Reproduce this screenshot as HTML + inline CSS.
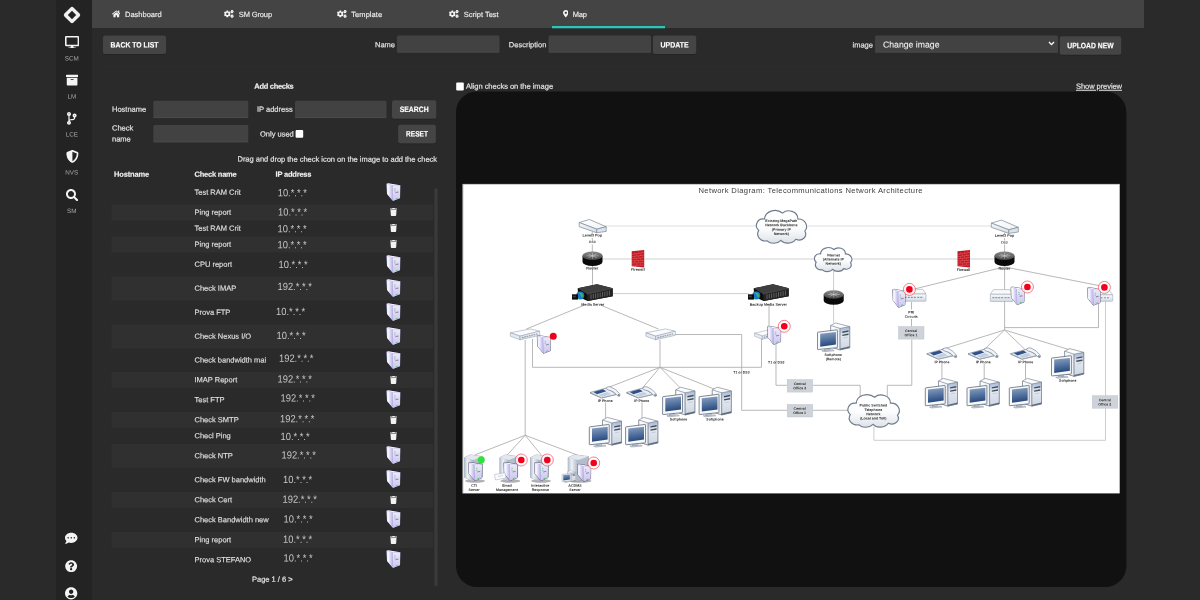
<!DOCTYPE html>
<html><head><meta charset="utf-8"><title>Map</title>
<style>
*{box-sizing:border-box;margin:0;padding:0}
html,body{width:1200px;height:600px;overflow:hidden;background:#2a2a2a;font-family:"Liberation Sans",sans-serif;color:#e6e6e6;font-size:7.5px}
#wrap{position:absolute;left:0;top:0;width:1200px;height:600px;will-change:transform}
.abs{position:absolute}
.t{position:absolute;white-space:nowrap;color:#e4e4e4;-webkit-text-stroke:0.18px #e4e4e4;transform-origin:0 0}
.c{text-align:center;transform-origin:50% 50%}
.b{font-weight:bold;color:#f0f0f0}
</style></head><body><div id="wrap">
<svg class="abs" style="left:0;top:0" width="1200" height="600" viewBox="0 0 1200 600"><defs><filter id="sh" x="-10%" y="-10%" width="120%" height="130%"><feDropShadow dx="0" dy=".5" stdDeviation=".5" flood-color="#000" flood-opacity=".3"/></filter></defs>
<rect x="56" y="0" width="36" height="600" rx="0" fill="#232323" />
<rect x="92" y="0" width="1052" height="28" rx="0" fill="#444" />
<rect x="552" y="26" width="113" height="2.3" rx="0" fill="#2ec4b6" />
<rect x="103" y="35.5" width="63" height="18.6" rx="2" fill="#444" filter="url(#sh)"/>
<rect x="397" y="35.4" width="102.5" height="17" rx="1.5" fill="#424242" />
<rect x="397" y="51.6" width="102.5" height="0.9" rx="0" fill="#4b4b4b" />
<rect x="548.5" y="35.4" width="102.5" height="17" rx="1.5" fill="#424242" />
<rect x="548.5" y="51.6" width="102.5" height="0.9" rx="0" fill="#4b4b4b" />
<rect x="653" y="35.6" width="43.2" height="18.5" rx="2" fill="#444" filter="url(#sh)"/>
<rect x="875" y="35.4" width="183" height="17" rx="1.5" fill="#424242" />
<rect x="875" y="51.6" width="183" height="0.9" rx="0" fill="#4b4b4b" />
<rect x="1059.7" y="36.3" width="61.5" height="18.5" rx="2" fill="#444" filter="url(#sh)"/>
<rect x="103" y="66.4" width="1018.5" height="0.8" rx="0" fill="#2f2f2f" />
<rect x="153.3" y="100.8" width="95" height="17.2" rx="1.5" fill="#424242" />
<rect x="153.3" y="117.2" width="95" height="0.9" rx="0" fill="#4b4b4b" />
<rect x="295" y="100.8" width="91.5" height="17.2" rx="1.5" fill="#424242" />
<rect x="295" y="117.2" width="91.5" height="0.9" rx="0" fill="#4b4b4b" />
<rect x="392" y="100.3" width="44.3" height="18.5" rx="2" fill="#444" filter="url(#sh)"/>
<rect x="153.3" y="125" width="95" height="17.2" rx="1.5" fill="#424242" />
<rect x="153.3" y="141.4" width="95" height="0.9" rx="0" fill="#4b4b4b" />
<rect x="295.6" y="130.1" width="7.6" height="7.6" rx="1" fill="#fff" />
<rect x="398.1" y="124.8" width="37.8" height="18.5" rx="2" fill="#444" filter="url(#sh)"/>
<rect x="111.5" y="204.4" width="321.5" height="16" rx="0" fill="#303030" />
<rect x="111.5" y="236.4" width="321.5" height="16" rx="0" fill="#303030" />
<rect x="111.5" y="276.4" width="321.5" height="24" rx="0" fill="#303030" />
<rect x="111.5" y="324.4" width="321.5" height="24" rx="0" fill="#303030" />
<rect x="111.5" y="371.9" width="321.5" height="16" rx="0" fill="#303030" />
<rect x="111.5" y="411.9" width="321.5" height="16" rx="0" fill="#303030" />
<rect x="111.5" y="443.9" width="321.5" height="24" rx="0" fill="#303030" />
<rect x="111.5" y="491.9" width="321.5" height="16" rx="0" fill="#303030" />
<rect x="111.5" y="531.9" width="321.5" height="16" rx="0" fill="#303030" />
<rect x="434.3" y="188.5" width="3.3" height="397.5" rx="0" fill="#3a3a3a" />
<rect x="456.2" y="82.6" width="7.6" height="7.8" rx="1" fill="#fff" />
<rect x="456" y="91.4" width="670.4" height="495.6" rx="21" fill="#111" />
</svg>
<svg class="abs" style="left:62px;top:4.85px" width="20" height="20" viewBox="-10 -10 20 20"><rect x="-4.650" y="-4.650" width="9.300" height="9.300" rx=".3" transform="rotate(45)" fill="none" stroke="#f1f1f1" stroke-width="3.400" stroke-linejoin="round"/></svg>
<svg class="abs" style="left:65.1px;top:35.6px" width="14.20" height="12.62" viewBox="0 0 576 512" ><path fill="#f4f4f4" fill-rule="evenodd" d="M528 0H48C21.5 0 0 21.5 0 48v320c0 26.5 21.5 48 48 48h192l-16 48h-72c-13.3 0-24 10.7-24 24s10.7 24 24 24h272c13.3 0 24-10.7 24-24s-10.7-24-24-24h-72l-16-48h192c26.5 0 48-21.5 48-48V48c0-26.5-21.5-48-48-48zm-16 352H64V64h448v288z"/></svg>
<svg class="abs" style="left:66.1px;top:74.3px" width="12.20" height="12.20" viewBox="0 0 512 512" ><path fill="#f4f4f4" fill-rule="evenodd" d="M32 448c0 17.7 14.3 32 32 32h384c17.7 0 32-14.3 32-32V160H32v288zm160-212c0-6.6 5.4-12 12-12h104c6.6 0 12 5.4 12 12v8c0 6.6-5.4 12-12 12H204c-6.6 0-12-5.4-12-12v-8zM480 32H32C14.3 32 0 46.3 0 64v48c0 8.8 7.2 16 16 16h480c8.8 0 16-7.2 16-16V64c0-17.7-14.3-32-32-32z"/></svg>
<svg class="abs" style="left:67.4px;top:111.9px" width="9.60" height="12.80" viewBox="0 0 384 512" ><path fill="#f4f4f4" fill-rule="evenodd" d="M384 144c0-44.2-35.8-80-80-80s-80 35.800-80 80c0 36.400 24.300 67.100 57.500 76.800-.6 16.100-4.200 28.500-11 36.900-15.400 19.200-49.300 22.400-85.200 25.700-28.200 2.600-57.400 5.400-81.300 16.900v-144c32.500-10.200 56-40.500 56-76.300 0-44.200-35.800-80-80-80S0 35.800 0 80c0 35.800 23.500 66.100 56 76.300v199.300C23.500 365.900 0 396.200 0 432c0 44.200 35.800 80 80 80s80-35.800 80-80c0-34-21.200-63.100-51.200-74.600 3.100-5.200 7.800-9.800 14.900-13.400 16.200-8.200 40.400-10.400 66.100-12.800 42.200-3.900 90-8.400 118.200-43.400 14-17.400 21.100-39.800 21.600-67.900 31.600-10.800 54.400-40.700 54.400-75.900zM80 64c8.800 0 16 7.200 16 16s-7.200 16-16 16-16-7.200-16-16 7.200-16 16-16zm0 384c-8.800 0-16-7.200-16-16s7.200-16 16-16 16 7.200 16 16-7.200 16-16 16zm224-320c8.800 0 16 7.200 16 16s-7.200 16-16 16-16-7.200-16-16 7.200-16 16-16z"/></svg>
<svg class="abs" style="left:65.8px;top:149.85px" width="12.80" height="12.80" viewBox="0 0 512 512" ><path fill="#f4f4f4" fill-rule="evenodd" d="M466.5 83.7l-192-80a48.150 48.150 0 0 0-36.900 0l-192 80C27.700 91.100 16 108.600 16 128c0 198.500 114.500 335.700 221.500 380.300 11.800 4.900 25.100 4.900 36.900 0C360.100 472.600 496 349.300 496 128c0-19.400-11.700-36.900-29.500-44.300zM256.100 446.300l-.1-381 175.900 73.300c-3.300 151.400-82.100 261.100-175.800 307.700z"/></svg>
<svg class="abs" style="left:66.05px;top:188.85px" width="12.30" height="12.30" viewBox="0 0 512 512" ><path fill="#f4f4f4" fill-rule="evenodd" d="M505 442.7L405.3 343c-4.5-4.5-10.6-7-17-7H372c27.6-35.3 44-79.7 44-128C416 93.1 322.9 0 208 0S0 93.1 0 208s93.1 208 208 208c48.3 0 92.7-16.4 128-44v16.3c0 6.4 2.5 12.5 7 17l99.7 99.7c9.4 9.4 24.6 9.4 33.9 0l28.3-28.3c9.4-9.4 9.4-24.6.1-34zM208 336c-70.7 0-128-57.2-128-128 0-70.7 57.2-128 128-128 70.7 0 128 57.2 128 128 0 70.7-57.2 128-128 128z"/></svg>
<svg class="abs" style="left:65.35px;top:531.75px" width="12.50" height="12.50" viewBox="0 0 512 512" ><path fill="#f4f4f4" fill-rule="evenodd" d="M256 32C114.600 32 0 125.100 0 240c0 49.600 21.400 95 57 130.700C44.500 421.100 2.700 466 2.200 466.500c-2.200 2.300-2.800 5.700-1.500 8.700S4.800 480 8 480c66.300 0 116-31.800 140.600-51.400 32.700 12.300 69 19.400 107.400 19.400 141.400 0 256-93.100 256-208S397.400 32 256 32zM128 272c-17.700 0-32-14.300-32-32s14.300-32 32-32 32 14.300 32 32-14.300 32-32 32zm128 0c-17.700 0-32-14.300-32-32s14.300-32 32-32 32 14.300 32 32-14.300 32-32 32zm128 0c-17.700 0-32-14.300-32-32s14.300-32 32-32 32 14.300 32 32-14.300 32-32 32z"/></svg>
<svg class="abs" style="left:65.45px;top:559.85px" width="12.30" height="12.30" viewBox="0 0 512 512" ><path fill="#f4f4f4" fill-rule="evenodd" d="M504 256c0 136.997-111.043 248-248 248S8 392.997 8 256C8 119.083 119.043 8 256 8s248 111.083 248 248zM262.655 90c-54.497 0-89.255 22.957-116.549 63.758-3.536 5.286-2.353 12.415 2.715 16.258l34.699 26.310c5.205 3.947 12.621 3.008 16.665-2.122 17.864-22.658 30.113-35.797 57.303-35.797 20.429 0 45.698 13.148 45.698 32.958 0 14.976-12.363 22.667-32.534 33.976C247.128 238.528 216 254.941 216 296v4c0 6.627 5.373 12 12 12h56c6.627 0 12-5.373 12-12v-1.333c0-28.462 83.186-29.647 83.186-106.667 0-58.002-60.165-102-116.531-102zM256 338c-25.365 0-46 20.635-46 46 0 25.364 20.635 46 46 46s46-20.636 46-46c0-25.365-20.635-46-46-46z"/></svg>
<svg class="abs" style="left:65.45px;top:587.2px" width="12.30" height="12.70" viewBox="0 0 496 512" ><path fill="#f4f4f4" fill-rule="evenodd" d="M248 8C111 8 0 119 0 256s111 248 248 248 248-111 248-248S385 8 248 8zm0 96c48.600 0 88 39.400 88 88s-39.400 88-88 88-88-39.400-88-88 39.400-88 88-88zm0 344c-58.700 0-111.300-26.600-146.500-68.200 18.800-35.400 55.600-59.800 98.500-59.800 2.400 0 4.800.4 7.100 1.100 13 4.200 26.600 6.900 40.900 6.900 14.300 0 28-2.700 40.900-6.900 2.300-.7 4.700-1.100 7.100-1.100 42.900 0 79.700 24.400 98.500 59.800C359.300 421.400 306.700 448 248 448z"/></svg>
<svg class="abs" style="left:111.7px;top:10.377777777777776px" width="8.60" height="7.64" viewBox="0 0 576 512" ><path fill="#f4f4f4" fill-rule="evenodd" d="M280.37 148.26L96 300.11V464a16 16 0 0 0 16 16l112.06-.29a16 16 0 0 0 15.92-16V368a16 16 0 0 1 16-16h64a16 16 0 0 1 16 16v95.64a16 16 0 0 0 16 16.05L464 480a16 16 0 0 0 16-16V300L295.67 148.26a12.19 12.19 0 0 0-15.3 0zM571.6 251.47L488 182.56V44.05a12 12 0 0 0-12-12h-56a12 12 0 0 0-12 12v72.61L318.47 43a48 48 0 0 0-61 0L4.34 251.47a12 12 0 0 0-1.6 16.9l25.5 31A12 12 0 0 0 45.15 301l235.22-193.74a12.19 12.19 0 0 1 15.3 0L530.9 301a12 12 0 0 0 16.9-1.6l25.5-31a12 12 0 0 0-1.7-16.93z"/></svg>
<svg class="abs" style="left:224.3px;top:10.28px" width="9.80" height="7.84" viewBox="0 0 640 512" ><path fill="#f4f4f4" fill-rule="evenodd" d="M512.1 191l-8.200 14.300c-3 5.300-9.400 7.500-15.100 5.400-11.800-4.400-22.600-10.700-32.100-18.600-4.600-3.800-5.800-10.500-2.800-15.700l8.200-14.300c-6.900-8-12.300-17.300-15.900-27.400h-16.500c-6 0-11.200-4.300-12.200-10.300-2-12-2.100-24.600 0-37.100 1-6 6.200-10.400 12.200-10.400h16.500c3.600-10.100 9-19.400 15.900-27.400l-8.200-14.300c-3-5.200-1.900-11.900 2.800-15.700 9.500-7.900 20.400-14.200 32.100-18.600 5.700-2.100 12.100.1 15.100 5.400l8.200 14.300c10.500-1.900 21.200-1.900 31.700 0L552 6.300c3-5.300 9.400-7.500 15.100-5.400 11.800 4.400 22.600 10.700 32.100 18.600 4.600 3.800 5.800 10.500 2.800 15.700l-8.200 14.300c6.900 8 12.300 17.300 15.900 27.400h16.500c6 0 11.200 4.300 12.200 10.300 2 12 2.100 24.600 0 37.100-1 6-6.200 10.400-12.200 10.400h-16.500c-3.600 10.100-9 19.400-15.900 27.400l8.200 14.300c3 5.200 1.900 11.900-2.800 15.700-9.500 7.900-20.400 14.200-32.100 18.600-5.700 2.100-12.100-.1-15.100-5.400l-8.200-14.300c-10.400 1.900-21.200 1.900-31.700 0zm-10.500-58.800c38.500 29.600 82.400-14.300 52.800-52.800-38.500-29.700-82.400 14.300-52.800 52.800zM386.300 286.100l33.700 16.800c10.100 5.800 14.500 18.100 10.500 29.100-8.900 24.200-26.400 46.400-42.600 65.800-7.400 8.900-20.200 11.100-30.300 5.300l-29.100-16.800c-16 13.700-34.600 24.600-54.900 31.700v33.600c0 11.600-8.300 21.600-19.700 23.600-24.600 4.200-50.400 4.400-75.900 0-11.500-2-20-11.900-20-23.600V418c-20.300-7.200-38.900-18-54.900-31.700L74 403c-10 5.800-22.900 3.600-30.300-5.300-16.200-19.400-33.300-41.600-42.200-65.700-4-10.900.4-23.200 10.500-29.100l33.300-16.800c-3.900-20.900-3.900-42.400 0-63.400L12 205.800c-10.100-5.800-14.600-18.100-10.500-29 8.900-24.200 26-46.400 42.200-65.800 7.400-8.900 20.200-11.100 30.300-5.300l29.100 16.800c16-13.700 34.600-24.600 54.900-31.700V57.100c0-11.500 8.200-21.500 19.600-23.500 24.600-4.200 50.500-4.400 76-.1 11.500 2 20 11.900 20 23.600v33.600c20.300 7.200 38.900 18 54.900 31.700l29.100-16.800c10-5.800 22.900-3.600 30.300 5.300 16.200 19.400 33.200 41.600 42.100 65.800 4 10.900.1 23.200-10 29.100l-33.700 16.800c3.900 21 3.900 42.500 0 63.500zm-117.600 21.100c59.200-77-28.700-164.900-105.700-105.700-59.200 77 28.700 164.900 105.700 105.700zm243.400 182.700l-8.200 14.300c-3 5.300-9.400 7.500-15.100 5.400-11.800-4.400-22.600-10.700-32.100-18.600-4.600-3.800-5.800-10.500-2.800-15.700l8.200-14.300c-6.900-8-12.300-17.300-15.900-27.400h-16.500c-6 0-11.200-4.300-12.200-10.300-2-12-2.100-24.600 0-37.100 1-6 6.200-10.400 12.200-10.400h16.500c3.600-10.100 9-19.400 15.900-27.400l-8.200-14.300c-3-5.200-1.900-11.900 2.800-15.700 9.500-7.900 20.400-14.200 32.100-18.600 5.700-2.100 12.100.1 15.100 5.400l8.200 14.300c10.500-1.900 21.200-1.900 31.700 0l8.200-14.300c3-5.300 9.400-7.500 15.100-5.400 11.800 4.400 22.600 10.700 32.100 18.600 4.600 3.800 5.800 10.500 2.800 15.700l-8.200 14.300c6.900 8 12.300 17.300 15.900 27.400h16.500c6 0 11.200 4.300 12.200 10.300 2 12 2.100 24.600 0 37.100-1 6-6.200 10.400-12.200 10.400h-16.500c-3.600 10.100-9 19.400-15.900 27.400l8.200 14.300c3 5.200 1.900 11.900-2.800 15.700-9.500 7.900-20.400 14.200-32.100 18.600-5.700 2.100-12.100-.1-15.100-5.400l-8.200-14.300c-10.400 1.900-21.200 1.900-31.700 0zM501.600 431c38.500 29.600 82.400-14.300 52.800-52.800-38.500-29.600-82.400 14.300-52.800 52.800z"/><circle cx="528" cy="106" r="62" fill="#f4f4f4" opacity=".75"/><circle cx="528" cy="405" r="62" fill="#f4f4f4" opacity=".75"/></svg>
<svg class="abs" style="left:336.8px;top:10.28px" width="9.80" height="7.84" viewBox="0 0 640 512" ><path fill="#f4f4f4" fill-rule="evenodd" d="M512.1 191l-8.200 14.300c-3 5.300-9.400 7.500-15.100 5.400-11.800-4.400-22.600-10.700-32.100-18.600-4.600-3.800-5.800-10.500-2.800-15.700l8.200-14.300c-6.900-8-12.300-17.300-15.900-27.400h-16.500c-6 0-11.200-4.300-12.200-10.300-2-12-2.100-24.600 0-37.100 1-6 6.200-10.400 12.200-10.400h16.500c3.600-10.100 9-19.400 15.900-27.400l-8.200-14.300c-3-5.200-1.900-11.900 2.800-15.700 9.500-7.900 20.400-14.200 32.100-18.600 5.700-2.100 12.100.1 15.100 5.400l8.200 14.300c10.500-1.900 21.200-1.900 31.700 0L552 6.300c3-5.300 9.400-7.500 15.100-5.400 11.800 4.400 22.600 10.700 32.100 18.600 4.600 3.800 5.800 10.500 2.800 15.700l-8.200 14.300c6.900 8 12.300 17.300 15.900 27.400h16.500c6 0 11.200 4.300 12.200 10.300 2 12 2.100 24.600 0 37.100-1 6-6.200 10.400-12.200 10.400h-16.500c-3.600 10.100-9 19.400-15.900 27.400l8.200 14.300c3 5.200 1.900 11.900-2.800 15.700-9.500 7.900-20.400 14.200-32.100 18.600-5.700 2.100-12.100-.1-15.100-5.400l-8.200-14.300c-10.400 1.900-21.200 1.900-31.700 0zm-10.500-58.800c38.500 29.600 82.400-14.300 52.800-52.800-38.500-29.700-82.400 14.300-52.800 52.800zM386.300 286.100l33.700 16.800c10.100 5.800 14.500 18.100 10.500 29.100-8.900 24.200-26.400 46.400-42.600 65.800-7.400 8.900-20.200 11.100-30.300 5.300l-29.100-16.800c-16 13.700-34.600 24.600-54.900 31.700v33.600c0 11.600-8.300 21.600-19.700 23.600-24.600 4.200-50.400 4.400-75.900 0-11.500-2-20-11.900-20-23.600V418c-20.300-7.200-38.900-18-54.900-31.700L74 403c-10 5.800-22.900 3.600-30.300-5.300-16.200-19.400-33.300-41.600-42.200-65.700-4-10.900.4-23.200 10.500-29.100l33.300-16.800c-3.900-20.900-3.900-42.400 0-63.400L12 205.800c-10.100-5.800-14.600-18.100-10.500-29 8.900-24.200 26-46.400 42.200-65.800 7.400-8.900 20.200-11.100 30.300-5.300l29.100 16.800c16-13.700 34.600-24.600 54.900-31.700V57.100c0-11.500 8.200-21.500 19.600-23.500 24.600-4.200 50.500-4.400 76-.1 11.500 2 20 11.900 20 23.600v33.600c20.300 7.200 38.900 18 54.900 31.700l29.100-16.800c10-5.800 22.900-3.600 30.300 5.300 16.200 19.400 33.200 41.600 42.100 65.800 4 10.900.1 23.200-10 29.100l-33.700 16.800c3.900 21 3.900 42.500 0 63.500zm-117.600 21.100c59.200-77-28.700-164.900-105.700-105.700-59.200 77 28.700 164.900 105.700 105.700zm243.400 182.700l-8.200 14.300c-3 5.300-9.400 7.500-15.100 5.400-11.800-4.400-22.600-10.700-32.100-18.600-4.600-3.800-5.800-10.500-2.800-15.700l8.200-14.300c-6.900-8-12.300-17.300-15.900-27.400h-16.500c-6 0-11.200-4.300-12.200-10.300-2-12-2.100-24.600 0-37.100 1-6 6.200-10.400 12.200-10.400h16.500c3.600-10.100 9-19.400 15.900-27.400l-8.200-14.300c-3-5.200-1.900-11.900 2.800-15.700 9.500-7.900 20.400-14.200 32.100-18.600 5.700-2.100 12.100.1 15.100 5.400l8.200 14.300c10.500-1.900 21.200-1.900 31.700 0l8.200-14.300c3-5.300 9.400-7.500 15.100-5.400 11.800 4.400 22.600 10.700 32.100 18.600 4.600 3.800 5.800 10.500 2.800 15.700l-8.200 14.300c6.900 8 12.300 17.300 15.900 27.400h16.500c6 0 11.200 4.300 12.200 10.300 2 12 2.100 24.600 0 37.100-1 6-6.200 10.400-12.200 10.400h-16.500c-3.600 10.100-9 19.400-15.900 27.400l8.200 14.300c3 5.200 1.900 11.900-2.800 15.700-9.500 7.900-20.400 14.200-32.100 18.600-5.700 2.100-12.100-.1-15.100-5.400l-8.200-14.300c-10.400 1.900-21.200 1.900-31.700 0zM501.600 431c38.500 29.600 82.400-14.300 52.800-52.800-38.500-29.600-82.400 14.300-52.800 52.800z"/><circle cx="528" cy="106" r="62" fill="#f4f4f4" opacity=".75"/><circle cx="528" cy="405" r="62" fill="#f4f4f4" opacity=".75"/></svg>
<svg class="abs" style="left:449.3px;top:10.28px" width="9.80" height="7.84" viewBox="0 0 640 512" ><path fill="#f4f4f4" fill-rule="evenodd" d="M512.1 191l-8.200 14.300c-3 5.300-9.400 7.500-15.100 5.400-11.800-4.400-22.600-10.700-32.100-18.600-4.600-3.800-5.800-10.500-2.800-15.700l8.200-14.300c-6.900-8-12.300-17.300-15.900-27.400h-16.500c-6 0-11.200-4.300-12.200-10.300-2-12-2.100-24.600 0-37.100 1-6 6.200-10.400 12.200-10.400h16.500c3.600-10.100 9-19.400 15.900-27.400l-8.200-14.300c-3-5.200-1.900-11.900 2.800-15.700 9.500-7.900 20.400-14.200 32.100-18.600 5.700-2.100 12.100.1 15.100 5.400l8.200 14.300c10.500-1.900 21.200-1.900 31.700 0L552 6.300c3-5.300 9.400-7.500 15.100-5.400 11.800 4.400 22.600 10.700 32.100 18.600 4.600 3.800 5.800 10.500 2.800 15.700l-8.200 14.300c6.900 8 12.300 17.300 15.900 27.400h16.500c6 0 11.200 4.300 12.200 10.300 2 12 2.100 24.600 0 37.100-1 6-6.200 10.400-12.200 10.400h-16.500c-3.600 10.100-9 19.400-15.900 27.400l8.200 14.300c3 5.200 1.900 11.900-2.800 15.700-9.500 7.900-20.400 14.200-32.100 18.600-5.700 2.100-12.100-.1-15.100-5.400l-8.200-14.300c-10.400 1.900-21.200 1.900-31.700 0zm-10.500-58.800c38.500 29.600 82.400-14.300 52.800-52.800-38.500-29.700-82.400 14.300-52.800 52.800zM386.300 286.100l33.700 16.800c10.100 5.800 14.500 18.100 10.500 29.100-8.900 24.200-26.400 46.400-42.600 65.800-7.400 8.900-20.200 11.100-30.300 5.300l-29.100-16.800c-16 13.700-34.600 24.600-54.900 31.700v33.600c0 11.600-8.300 21.600-19.700 23.600-24.600 4.200-50.400 4.400-75.900 0-11.500-2-20-11.900-20-23.600V418c-20.300-7.200-38.900-18-54.900-31.700L74 403c-10 5.800-22.900 3.600-30.300-5.300-16.200-19.400-33.300-41.600-42.200-65.700-4-10.900.4-23.200 10.500-29.100l33.300-16.800c-3.900-20.900-3.900-42.400 0-63.400L12 205.800c-10.100-5.800-14.600-18.100-10.500-29 8.900-24.200 26-46.400 42.200-65.800 7.400-8.900 20.200-11.100 30.300-5.300l29.100 16.800c16-13.700 34.600-24.600 54.900-31.700V57.100c0-11.500 8.200-21.500 19.600-23.500 24.600-4.200 50.500-4.400 76-.1 11.500 2 20 11.900 20 23.600v33.600c20.300 7.200 38.900 18 54.900 31.700l29.100-16.800c10-5.800 22.900-3.600 30.300 5.300 16.200 19.400 33.200 41.600 42.100 65.800 4 10.900.1 23.200-10 29.100l-33.700 16.800c3.900 21 3.900 42.500 0 63.500zm-117.600 21.100c59.200-77-28.700-164.900-105.700-105.700-59.200 77 28.700 164.900 105.700 105.700zm243.400 182.700l-8.200 14.300c-3 5.300-9.400 7.500-15.100 5.400-11.800-4.400-22.600-10.700-32.100-18.600-4.600-3.800-5.800-10.500-2.800-15.700l8.200-14.300c-6.900-8-12.300-17.300-15.900-27.400h-16.500c-6 0-11.200-4.300-12.200-10.300-2-12-2.100-24.600 0-37.100 1-6 6.200-10.400 12.200-10.400h16.500c3.600-10.100 9-19.400 15.900-27.400l-8.200-14.300c-3-5.200-1.900-11.900 2.800-15.700 9.500-7.900 20.400-14.200 32.100-18.600 5.700-2.100 12.100.1 15.100 5.400l8.200 14.300c10.500-1.900 21.200-1.900 31.700 0l8.200-14.300c3-5.300 9.400-7.500 15.100-5.400 11.800 4.400 22.600 10.700 32.100 18.600 4.600 3.800 5.800 10.500 2.800 15.700l-8.200 14.300c6.900 8 12.300 17.300 15.900 27.400h16.500c6 0 11.200 4.300 12.200 10.300 2 12 2.100 24.600 0 37.100-1 6-6.200 10.400-12.200 10.400h-16.500c-3.600 10.100-9 19.400-15.900 27.400l8.200 14.300c3 5.200 1.900 11.900-2.800 15.700-9.500 7.900-20.400 14.200-32.100 18.600-5.700 2.100-12.100-.1-15.100-5.400l-8.200-14.300c-10.400 1.900-21.200 1.900-31.700 0zM501.600 431c38.500 29.600 82.400-14.300 52.800-52.800-38.500-29.600-82.400 14.300-52.800 52.800z"/><circle cx="528" cy="106" r="62" fill="#f4f4f4" opacity=".75"/><circle cx="528" cy="405" r="62" fill="#f4f4f4" opacity=".75"/></svg>
<svg class="abs" style="left:562.9px;top:10.466666666666667px" width="5.60" height="7.47" viewBox="0 0 384 512" ><path fill="#f4f4f4" fill-rule="evenodd" d="M172.268 501.67C26.97 291.031 0 269.413 0 192 0 85.961 85.961 0 192 0s192 85.961 192 192c0 77.413-26.97 99.031-172.268 309.67-9.535 13.774-29.93 13.773-39.464 0zM192 272c44.183 0 80-35.817 80-80s-35.817-80-80-80-80 35.817-80 80 35.817 80 80 80z"/></svg>
<svg class="abs" style="left:1047.5px;top:41px" width="7" height="5" viewBox="0 0 7 5"><path d="M1 1 L3.500 3.600 L6 1" fill="none" stroke="#fff" stroke-width="1.300"/></svg>
<svg class="abs" style="left:386.1px;top:182.7px" width="14.800" height="18.500" viewBox="0 0 15 19" preserveAspectRatio="none"><use href="#srv"/></svg>
<svg class="abs" style="left:389.7px;top:208.2px" width="7.00" height="8.00" viewBox="0 0 448 512" ><path fill="#f2f2f2" fill-rule="evenodd" d="M432 32H312l-9.4-18.700A24 24 0 0 0 281.100 0H166.800a23.720 23.720 0 0 0-21.400 13.300L136 32H16A16 16 0 0 0 0 48v32a16 16 0 0 0 16 16h416a16 16 0 0 0 16-16V48a16 16 0 0 0-16-16zM53.200 467a48 48 0 0 0 47.900 45h245.800a48 48 0 0 0 47.900-45L416 128H32z"/></svg>
<svg class="abs" style="left:389.7px;top:224.2px" width="7.00" height="8.00" viewBox="0 0 448 512" ><path fill="#f2f2f2" fill-rule="evenodd" d="M432 32H312l-9.4-18.700A24 24 0 0 0 281.100 0H166.800a23.720 23.720 0 0 0-21.400 13.300L136 32H16A16 16 0 0 0 0 48v32a16 16 0 0 0 16 16h416a16 16 0 0 0 16-16V48a16 16 0 0 0-16-16zM53.200 467a48 48 0 0 0 47.900 45h245.800a48 48 0 0 0 47.900-45L416 128H32z"/></svg>
<svg class="abs" style="left:389.7px;top:240.2px" width="7.00" height="8.00" viewBox="0 0 448 512" ><path fill="#f2f2f2" fill-rule="evenodd" d="M432 32H312l-9.4-18.700A24 24 0 0 0 281.100 0H166.800a23.720 23.720 0 0 0-21.400 13.300L136 32H16A16 16 0 0 0 0 48v32a16 16 0 0 0 16 16h416a16 16 0 0 0 16-16V48a16 16 0 0 0-16-16zM53.200 467a48 48 0 0 0 47.900 45h245.800a48 48 0 0 0 47.900-45L416 128H32z"/></svg>
<svg class="abs" style="left:386.1px;top:254.7px" width="14.800" height="18.500" viewBox="0 0 15 19" preserveAspectRatio="none"><use href="#srv"/></svg>
<svg class="abs" style="left:386.1px;top:278.7px" width="14.800" height="18.500" viewBox="0 0 15 19" preserveAspectRatio="none"><use href="#srv"/></svg>
<svg class="abs" style="left:386.1px;top:302.7px" width="14.800" height="18.500" viewBox="0 0 15 19" preserveAspectRatio="none"><use href="#srv"/></svg>
<svg class="abs" style="left:386.1px;top:326.7px" width="14.800" height="18.500" viewBox="0 0 15 19" preserveAspectRatio="none"><use href="#srv"/></svg>
<svg class="abs" style="left:386.1px;top:350.7px" width="14.800" height="18.500" viewBox="0 0 15 19" preserveAspectRatio="none"><use href="#srv"/></svg>
<svg class="abs" style="left:389.7px;top:375.7px" width="7.00" height="8.00" viewBox="0 0 448 512" ><path fill="#f2f2f2" fill-rule="evenodd" d="M432 32H312l-9.4-18.700A24 24 0 0 0 281.100 0H166.800a23.720 23.720 0 0 0-21.400 13.300L136 32H16A16 16 0 0 0 0 48v32a16 16 0 0 0 16 16h416a16 16 0 0 0 16-16V48a16 16 0 0 0-16-16zM53.200 467a48 48 0 0 0 47.900 45h245.800a48 48 0 0 0 47.900-45L416 128H32z"/></svg>
<svg class="abs" style="left:386.1px;top:390.2px" width="14.800" height="18.500" viewBox="0 0 15 19" preserveAspectRatio="none"><use href="#srv"/></svg>
<svg class="abs" style="left:389.7px;top:415.7px" width="7.00" height="8.00" viewBox="0 0 448 512" ><path fill="#f2f2f2" fill-rule="evenodd" d="M432 32H312l-9.4-18.700A24 24 0 0 0 281.100 0H166.800a23.720 23.720 0 0 0-21.400 13.300L136 32H16A16 16 0 0 0 0 48v32a16 16 0 0 0 16 16h416a16 16 0 0 0 16-16V48a16 16 0 0 0-16-16zM53.200 467a48 48 0 0 0 47.900 45h245.800a48 48 0 0 0 47.900-45L416 128H32z"/></svg>
<svg class="abs" style="left:389.7px;top:431.7px" width="7.00" height="8.00" viewBox="0 0 448 512" ><path fill="#f2f2f2" fill-rule="evenodd" d="M432 32H312l-9.4-18.700A24 24 0 0 0 281.100 0H166.800a23.720 23.720 0 0 0-21.400 13.300L136 32H16A16 16 0 0 0 0 48v32a16 16 0 0 0 16 16h416a16 16 0 0 0 16-16V48a16 16 0 0 0-16-16zM53.200 467a48 48 0 0 0 47.900 45h245.800a48 48 0 0 0 47.900-45L416 128H32z"/></svg>
<svg class="abs" style="left:386.1px;top:446.2px" width="14.800" height="18.500" viewBox="0 0 15 19" preserveAspectRatio="none"><use href="#srv"/></svg>
<svg class="abs" style="left:386.1px;top:470.2px" width="14.800" height="18.500" viewBox="0 0 15 19" preserveAspectRatio="none"><use href="#srv"/></svg>
<svg class="abs" style="left:389.7px;top:495.7px" width="7.00" height="8.00" viewBox="0 0 448 512" ><path fill="#f2f2f2" fill-rule="evenodd" d="M432 32H312l-9.4-18.700A24 24 0 0 0 281.100 0H166.800a23.720 23.720 0 0 0-21.400 13.300L136 32H16A16 16 0 0 0 0 48v32a16 16 0 0 0 16 16h416a16 16 0 0 0 16-16V48a16 16 0 0 0-16-16zM53.200 467a48 48 0 0 0 47.900 45h245.800a48 48 0 0 0 47.900-45L416 128H32z"/></svg>
<svg class="abs" style="left:386.1px;top:510.2px" width="14.800" height="18.500" viewBox="0 0 15 19" preserveAspectRatio="none"><use href="#srv"/></svg>
<svg class="abs" style="left:389.7px;top:535.7px" width="7.00" height="8.00" viewBox="0 0 448 512" ><path fill="#f2f2f2" fill-rule="evenodd" d="M432 32H312l-9.4-18.700A24 24 0 0 0 281.100 0H166.800a23.720 23.720 0 0 0-21.400 13.300L136 32H16A16 16 0 0 0 0 48v32a16 16 0 0 0 16 16h416a16 16 0 0 0 16-16V48a16 16 0 0 0-16-16zM53.200 467a48 48 0 0 0 47.900 45h245.800a48 48 0 0 0 47.900-45L416 128H32z"/></svg>
<svg class="abs" style="left:386.1px;top:550.2px" width="14.800" height="18.500" viewBox="0 0 15 19" preserveAspectRatio="none"><use href="#srv"/></svg>
<svg class="abs" style="left:0;top:0" width="1200" height="600" viewBox="0 0 1200 600">
<defs>
<linearGradient id="lv" x1="0" y1="0" x2="1" y2="0"><stop offset="0" stop-color="#dcd8f7"/><stop offset=".25" stop-color="#fbfaff"/><stop offset="1" stop-color="#b4aee6"/></linearGradient>
<linearGradient id="lvf" x1="0" y1="0" x2="0" y2="1"><stop offset="0" stop-color="#ece9fb"/><stop offset="1" stop-color="#cbc5ef"/></linearGradient>
<g id="srv"><path d="M.5 .75 L2.250 .25 L14.500 2.250 L14.500 2.750 L14.250 15.750 L7 18.500 L1 11.250 Z" fill="#8f88c8" stroke="#0c0c14" stroke-opacity=".55" stroke-width=".9"/><path d="M.5 .75 L6.750 2.250 L7 18.500 L1 11.250 Z" fill="url(#lv)"/><path d="M6.750 2.250 L14.500 2.750 L14.250 15.750 L7 18.500 Z" fill="url(#lvf)"/><path d="M.5 .75 L2.250 .25 L14.500 2.250 L14.500 2.750 L6.750 2.250 Z" fill="#f4f2ff"/><rect x="8.400" y="5.700" width="1.300" height=".8" fill="#5fbf6a"/><rect x="8.400" y="7.700" width="1.300" height=".8" fill="#5fbf6a"/><path d="M9.600 9.300 L12.700 8.700 L12.700 9.700 L9.600 10.400 Z" fill="#8c8a9c"/><path d="M10 16 L11.800 15.300 L11.800 16.300 L10 17 Z" fill="#4fc45a"/></g>
<linearGradient id="swt" x1="0" y1="0" x2="1" y2="1"><stop offset="0" stop-color="#ffffff"/><stop offset="1" stop-color="#eef2f6"/></linearGradient>
<linearGradient id="swf" x1="0" y1="0" x2="0" y2="1"><stop offset="0" stop-color="#f8fafc"/><stop offset="1" stop-color="#d3dbe5"/></linearGradient>
<g id="sw" stroke="#7b8796" stroke-width=".7" stroke-linejoin="round"><path d="M0 3.300 L10.200 .3 L27 7.500 L17.500 10 Z" fill="url(#swt)"/><path d="M0 3.300 L17.500 10 L17.500 13.600 L0 7.500 Z" fill="url(#swf)"/><path d="M17.500 10 L27 7.500 L27 12.200 L17.500 13.600 Z" fill="#dbe3ec"/></g>
<g id="sw2" stroke-linejoin="round"><path d="M3.500 .3 L20.500 .3 L23.700 5 L.3 5 Z" fill="#f7f9fb" stroke="#8a96a6" stroke-width=".5"/><rect x=".3" y="5" width="23.400" height="7.200" rx=".8" fill="url(#swf)" stroke="#8a96a6" stroke-width=".5"/><path d="M2.500 8.300 h2 M5.500 8.300 h2 M8.500 8.300 h2 M11.500 8.300 h2 M15 8.300 h2 M18 8.300 h2" stroke="#6f7a8a" stroke-width="1.300" opacity=".75"/></g>
<g id="sw3" stroke="#8794a5" stroke-width=".5" stroke-linejoin="round"><path d="M.3 4.200 L20 .3 L29.700 2.600 L10 7.500 Z" fill="#fafbfd"/><path d="M.3 4.200 L10 7.500 L10 11.200 L.3 7.600 Z" fill="#e6ebf1"/><path d="M10 7.500 L29.700 2.600 L29.700 6.700 L10 11.200 Z" fill="url(#swf)"/><path d="M12 9 L28 5.200" stroke="#6f7b8c" stroke-width="1.200" stroke-dasharray="1.600 .8" opacity=".7"/></g>
<linearGradient id="rtt" x1="0" y1="0" x2="0" y2="1"><stop offset="0" stop-color="#8a8a8a"/><stop offset="1" stop-color="#444"/></linearGradient>
<g id="rt"><path d="M0 4 L0 9.500 A10 4 0 0 0 20 9.500 L20 4 Z" fill="#0a0a0a"/><ellipse cx="10" cy="4" rx="10" ry="4" fill="url(#rtt)"/><path d="M4 4 L16 4 M10 1.300 L10 6.700 M6 2.300 L14 5.700 M14 2.300 L6 5.700" stroke="#e8e8e8" stroke-width=".55" opacity=".8"/></g>
<g id="fw"><path d="M0 1.300 L12.500 0 L12.500 16.700 L0 15.500 Z" fill="#c21822"/><path d="M0 4.300 L12.500 2.400 M0 6.400 L12.500 4.800 M0 8.400 L12.500 7.200 M0 10.500 L12.500 9.600 M0 12.500 L12.500 12 M0 14.600 L12.500 14.400" stroke="#f08a8a" stroke-width=".45" opacity=".8"/><path d="M3 2 L3 4 M7 1.300 L7 3.300 M10.500 .7 L10.500 2.700 M5 3.900 L5 5.800 M9 3.300 L9 5.300 M3 6 L3 8 M7 5.500 L7 7.600 M10.500 5.100 L10.500 7.300 M5 8 L5 10 M9 7.600 L9 9.800 M3 10.100 L3 12.200 M7 9.900 L7 12.100 M10.500 9.700 L10.500 12 M5 12.300 L5 14.500 M9 12.200 L9 14.500" stroke="#f08a8a" stroke-width=".4" opacity=".6"/></g>
<g id="ms"><path d="M5.700 4 L25 0 L40.700 4 L40.700 12 L15.700 16.700 L6.300 12.700 Z" fill="#0e0e0e"/><path d="M5.700 4 L25 0 L40.700 4 L15 9.700 Z" fill="#3e3e3e"/><path d="M15 9.700 L40.700 4.300 L40.700 12 L15.700 16.700 Z" fill="#232323"/><path d="M19.0 10.16 L19.0 14.65 M21.3 9.68 L21.3 14.22 M23.6 9.19 L23.6 13.78 M25.9 8.71 L25.9 13.35 M28.2 8.23 L28.2 12.92 M30.5 7.74 L30.5 12.49 M32.8 7.26 L32.8 12.05 M35.1 6.78 L35.1 11.62 M37.4 6.30 L37.4 11.19" stroke="#707070" stroke-width=".8"/><path d="M15 9.700 L40.700 4.200" stroke="#6a6a6a" stroke-width=".5"/><circle cx="8.200" cy="11.300" r="4" fill="#1b74d6"/><path d="M6 8 Q9.500 8.300 10.600 9.500 Q11.500 11.500 10 13.500 Q8.500 12 8.800 10.500 Q7 9.500 6 8 Z" fill="#3fb84c"/><path d="M5.500 13.500 Q7 13 7.500 14.800 Q6.500 14.800 5.500 13.500Z" fill="#3fb84c"/><rect x="0" y="10" width="6" height="5.300" fill="#0c0c0c"/><rect x=".7" y="11.300" width="3.200" height="1.800" fill="#3a3a3a"/></g>
<linearGradient id="cl" x1="0" y1="0" x2="0" y2="1"><stop offset="0" stop-color="#ffffff"/><stop offset=".55" stop-color="#fbfcfd"/><stop offset="1" stop-color="#dde2e9"/></linearGradient>
<path id="cloud" d="M22 61 C9 63 0 52 6 42 C-3 34 3 19 17 21 C18 7 38 0 51 10 C60 2 80 6 80 21 C94 20 101 35 93 43 C99 53 88 63 76 58 C70 67 54 67 48 60 C41 67 28 67 22 61 Z" fill="url(#cl)" stroke="#6f7b8d" stroke-width="1.150" vector-effect="non-scaling-stroke"/>
<linearGradient id="scr" x1="0" y1="0" x2=".15" y2="1"><stop offset="0" stop-color="#8da4c4"/><stop offset=".45" stop-color="#5d7ba6"/><stop offset="1" stop-color="#27497d"/></linearGradient>
<linearGradient id="tw" x1="0" y1="0" x2="1" y2="0"><stop offset="0" stop-color="#ffffff"/><stop offset="1" stop-color="#e9eef4"/></linearGradient>
<linearGradient id="twf" x1="0" y1="0" x2="0" y2="1"><stop offset="0" stop-color="#a3b6d1"/><stop offset=".4" stop-color="#e2e8f0"/><stop offset="1" stop-color="#cbd5e2"/></linearGradient>
<g id="pc" stroke-linejoin="round"><g stroke="#6b7686" stroke-width=".6"><path d="M13.500 3 L18.400 .4 L32.500 4.100 L32.500 25.900 L22.900 28.100 L13.500 25 Z" fill="#fbfcfd"/><path d="M13.500 3 L22.900 6 L22.900 28.100 L13.500 25 Z" fill="url(#tw)"/><path d="M22.900 6 L32.500 4.100 L32.500 25.900 L22.900 28.100 Z" fill="url(#twf)"/></g><path d="M25.100 9.200 L31.300 8 L31.300 9.400 L25.100 10.600 Z M25.100 12.400 L31.300 11.300 L31.300 12.700 L25.100 13.800 Z" fill="#454d5b"/><path d="M26 15.800 L30.500 15" stroke="#9aa5b5" stroke-width=".4"/><path d="M22.900 26.700 L32.500 24.500 L32.500 25.900 L22.900 28.100 Z" fill="#4f5968" opacity=".85"/><path d="M7.500 27 L12 26.400 L12.800 28.600 L7 29.200 Z" fill="#c9d6e6" stroke="#6b7686" stroke-width=".4"/><path d="M4.500 29 L15.500 28 L17 29 L6.500 30 Z" fill="#dfe6ef" stroke="#6b7686" stroke-width=".45"/><path d="M.3 10.400 Q.3 9.900 .8 9.840 L19.600 7.480 Q20.200 7.400 20.200 8 L20.200 25.300 Q20.200 25.800 19.600 25.860 L.9 27.740 Q.3 27.800 .3 27.200 Z" fill="#f7f9fb" stroke="#58616f" stroke-width=".75"/><path d="M3 11.400 L18.700 9.700 L18.700 22.600 L3 24.800 Z" fill="url(#scr)"/></g>
<g id="ph" stroke-linejoin="round"><path d="M0 6 L11.700 11.300 L11.700 12.100 L0 6.900 Z" fill="#8f9bad"/><path d="M11.700 11.300 L26.600 7.800 L26.600 8.600 L11.700 12.100 Z" fill="#a9b4c4"/><path d="M0 6 L16.700 1.400 L26.600 7.800 L11.700 11.300 Z" fill="#e9eef4" stroke="#5f6b7c" stroke-width=".55"/><path d="M3.300 5.400 L13 2.700 L16.300 4.700 L7 7.700 Z" fill="#2f5288"/><path d="M8.500 8.400 L17 5.400 L21 7.500 L12.500 10.300 Z" fill="#c3cede"/><path d="M16.500 1 Q18 -.2 20.500 .3 Q26 2.500 29.300 6.800 Q30.800 8.800 29.600 9.700 Q28 10.300 26.800 8.600 Q24.500 5.500 21 4.200 Q18 3.600 16.800 2.700 Q15.800 1.800 16.500 1 Z" fill="#f1f4f8" stroke="#5f6b7c" stroke-width=".55"/><path d="M28 7.200 L30 8.300 L29.800 9.700 L27.600 9.300 Z" fill="#7f8b9d"/></g>
<linearGradient id="gt" x1="0" y1="0" x2="1" y2="0"><stop offset="0" stop-color="#b4bfce"/><stop offset=".35" stop-color="#eef1f5"/><stop offset="1" stop-color="#a7b2c3"/></linearGradient>
<g id="gtw"><ellipse cx="10.500" cy="26" rx="9.500" ry="1.800" fill="#000" opacity=".3"/><path d="M.5 3 L6 .3 L17.500 2 L17.500 22 L9 26.500 L.5 22.500 Z" fill="#b3bdcb" stroke="#7f8b9b" stroke-width=".45"/><path d="M.5 3 L9 5.500 L9 26.500 L.5 22.500 Z" fill="url(#gt)"/><path d="M.5 3 L6 .3 L17.500 2 L9 5.500 Z" fill="#e3e8ee"/></g>
<g id="bsv"><use href="#gtw"/><g transform="translate(3.800,7.500) scale(.92,.98)"><use href="#srv"/></g></g>
</defs>
<rect x="462.600" y="184" width="657.100" height="309.400" fill="#fff"/>
<path d="M462.600 184.250 L1119.700 184.250 M462.900 184 L462.900 493.400" stroke="#8c8c8c" stroke-width=".6" fill="none"/>
<g id="dg">
<path d="M605 226 L756 226 M808 226 L992 226" fill="none" stroke="#d2d2d2" stroke-width=".75"/>
<path d="M602.500 259 L631.700 259 M644.200 259 L814 259 M853 259 L957.500 259 M970 259 L995 259" fill="none" stroke="#c2c2c2" stroke-width=".75"/>
<path d="M613 293.600 L749 293.600" fill="none" stroke="#c2c2c2" stroke-width=".8"/>
<path d="M833.600 271 L833.600 290 M833.600 303 L833.600 323" fill="none" stroke="#cdcdcd" stroke-width="1"/>
<path d="M873.900 427 L873.900 440.300 L1105.500 440.300 L1105.500 408.200 M1105.500 395.600 L1105.500 301" fill="none" stroke="#c0c0c0" stroke-width=".8"/>
<path d="M592.3 232 L592.3 234 M592.3 238 L592.3 240.5 M592.3 244.5 L592.3 252 M592.5 265 L592.5 286 M1004.6 232.5 L1004.6 234 M1004.6 238 L1004.6 240.5 M1004.6 244.5 L1004.6 252 M584 305.3 L526.4 329 M601 305.3 L658.5 329 M525.2 340 L525.2 435.3 M525.2 435.3 L474.7 455 M525.2 435.3 L507.3 455 M525.2 435.3 L541.3 455 M525.2 435.3 L577.3 455 M532.5 339 L532.5 367.3 L761.5 367.3 L761.5 339 M660 340 L660 367.3 M660 367.3 L607 388 M660 367.3 L642.5 388 M660 367.3 L680.4 388 M660 367.3 L715.4 389.5 M605.6 402.5 L605.6 418 M642 402.5 L642 418 M674 334.5 L741.7 334.5 L741.7 410.3 L787 410.3 M769 305.5 L769 329 M776 344 L776 385.3 L787 385.3 M812.7 385.3 L860.2 385.3 L860.2 397 M812.7 410.3 L848 410.3 M887.3 396 L887.3 385.3 L911.8 385.3 L911.8 339.7 M911.5 302 L911.5 309.5 M911.5 319 L911.5 326.5 M1004 267 L913 289.3 M1005.2 267 L1104 286.6 M1004.6 265 L1004.6 330 M1098.5 302 L1098.5 327.6 L1004.6 327.6 M1004.6 330 L941.9 349.5 M1004.6 330 L984.2 349.5 M1004.6 330 L1025 349.5 M1004.6 330 L1068.8 349.5 M941.9 363.5 L941.9 379 M984.2 363.5 L984.2 379 M1025.5 363.5 L1025.5 379" fill="none" stroke="#ababab" stroke-width=".85"/>
<use href="#sw" transform="translate(579.2,219.2) scale(1,1)"/>
<use href="#rt" transform="translate(582.5,251.6) scale(1,1.06)"/>
<use href="#fw" transform="translate(631.7,250) scale(1,1.05)"/>
<use href="#ms" transform="translate(572,284.3) scale(1,1)"/>
<use href="#ms" transform="translate(748,284.3) scale(1,1)"/>
<use href="#cloud" transform="translate(755.5,207.6) scale(0.53,0.545455)"/>
<use href="#cloud" transform="translate(813.8,245.5) scale(0.395,0.398485)"/>
<use href="#rt" transform="translate(823.7,290.2) scale(1,1.08)"/>
<use href="#pc" transform="translate(817.2,322.6) scale(1,0.97)"/>
<use href="#sw" transform="translate(991.3,219.8) scale(1,1)"/>
<use href="#fw" transform="translate(957.5,250) scale(1,1.05)"/>
<use href="#rt" transform="translate(994.5,251.6) scale(1,1.06)"/>
<use href="#sw3" transform="translate(510,328.6) scale(1,1)"/>
<use href="#srv" transform="translate(536.8,335.3) scale(0.95,0.98)"/>
<circle cx="553.25" cy="336.3" r="3.5" fill="#f0001a"/>
<use href="#sw3" transform="translate(645.6,328.6) scale(1,1)"/>
<use href="#sw3" transform="translate(754.3,329.3) scale(0.8,0.9)"/>
<use href="#srv" transform="translate(767,326) scale(0.95,1)"/>
<circle cx="784.25" cy="326.3" r="6" fill="#fff" fill-opacity=".75" stroke="#f0465a" stroke-width=".7"/>
<circle cx="784.25" cy="326.3" r="3.3" fill="#f0001a"/>
<rect x="787.2" y="379.5" width="25.500" height="12.600" fill="#cdd3d9" stroke="#b8bfc7" stroke-width=".4"/>
<rect x="787.2" y="404.4" width="25.500" height="12.600" fill="#cdd3d9" stroke="#b8bfc7" stroke-width=".4"/>
<rect x="898.5" y="326.5" width="25.500" height="12.600" fill="#cdd3d9" stroke="#b8bfc7" stroke-width=".4"/>
<rect x="1092.3" y="395.6" width="25.500" height="12.600" fill="#cdd3d9" stroke="#b8bfc7" stroke-width=".4"/>
<use href="#cloud" transform="translate(847,391.8) scale(0.543,0.542424)"/>
<use href="#bsv" transform="translate(464,454.5) scale(1.05,1.02)"/>
<circle cx="481.3" cy="459.7" r="3.5" fill="#2fe23a"/>
<use href="#bsv" transform="translate(499.3,454.5) scale(1.05,1.02)"/>
<path d="M494.500 474.500 L505 472.800 L506 478 L495.500 480 Z" fill="#fafbfc" stroke="#8a96a6" stroke-width=".4"/><path d="M498 476.500 L503 475.600" stroke="#99a" stroke-width=".4"/>
<circle cx="521.3" cy="460" r="6" fill="#fff" fill-opacity=".75" stroke="#f0465a" stroke-width=".7"/>
<circle cx="521.3" cy="460" r="3.3" fill="#f0001a"/>
<use href="#bsv" transform="translate(530,454.5) scale(1.05,1.02)"/>
<circle cx="547.3" cy="460" r="6" fill="#fff" fill-opacity=".75" stroke="#f0465a" stroke-width=".7"/>
<circle cx="547.3" cy="460" r="3.3" fill="#f0001a"/>
<use href="#gtw" transform="translate(567.5,454.5) scale(1.2,1.02)"/>
<use href="#srv" transform="translate(577,464) scale(0.95,0.95)"/>
<use href="#pc" transform="translate(562,470.5) scale(0.42,0.4)"/>
<circle cx="593.7" cy="463" r="6" fill="#fff" fill-opacity=".75" stroke="#f0465a" stroke-width=".7"/>
<circle cx="593.7" cy="463" r="3.3" fill="#f0001a"/>
<use href="#ph" transform="translate(590,386.5) scale(1,1)"/>
<use href="#ph" transform="translate(626.5,386.5) scale(1,1)"/>
<use href="#pc" transform="translate(662.3,386.8) scale(1,1)"/>
<use href="#pc" transform="translate(698.8,386.8) scale(1,1)"/>
<use href="#pc" transform="translate(589,417) scale(1,1)"/>
<use href="#pc" transform="translate(625.3,417) scale(1,1)"/>
<use href="#sw2" transform="translate(902.3,289) scale(1,1)"/>
<use href="#srv" transform="translate(892.2,289) scale(0.9,1)"/>
<circle cx="909.4" cy="289.4" r="6" fill="#fff" fill-opacity=".75" stroke="#f0465a" stroke-width=".7"/>
<circle cx="909.4" cy="289.4" r="3.3" fill="#f0001a"/>
<use href="#sw2" transform="translate(990,289.3) scale(0.97,1)"/>
<use href="#srv" transform="translate(1010.5,286.8) scale(0.95,0.97)"/>
<circle cx="1027.4" cy="287" r="6" fill="#fff" fill-opacity=".75" stroke="#f0465a" stroke-width=".7"/>
<circle cx="1027.4" cy="287" r="3.3" fill="#f0001a"/>
<use href="#sw2" transform="translate(1089,290.3) scale(1,0.9)"/>
<use href="#srv" transform="translate(1087,287.2) scale(0.92,0.98)"/>
<circle cx="1104.4" cy="287.4" r="6" fill="#fff" fill-opacity=".75" stroke="#f0465a" stroke-width=".7"/>
<circle cx="1104.4" cy="287.4" r="3.3" fill="#f0001a"/>
<use href="#ph" transform="translate(926.7,347.7) scale(1,1)"/>
<use href="#ph" transform="translate(968,347.7) scale(1,1)"/>
<use href="#ph" transform="translate(1010.4,347.7) scale(1,1)"/>
<use href="#pc" transform="translate(1051.2,348.2) scale(1,1)"/>
<use href="#pc" transform="translate(925,378) scale(1,1)"/>
<use href="#pc" transform="translate(966.7,378) scale(1,1)"/>
<use href="#pc" transform="translate(1009,378) scale(1,1)"/>
<g fill="#222" text-anchor="middle" font-family="Liberation Sans, sans-serif" opacity=".95" transform="rotate(0.04)"><text x="592.5" y="236" font-size="3.7" font-weight="bold">Level3 Pop</text><text x="592.5" y="242.7" font-size="3.3" font-weight="bold">DS3</text><text x="592.5" y="269" font-size="3.7" font-weight="bold">Router</text><text x="638" y="270.3" font-size="3.7" font-weight="bold">Firewall</text><text x="593" y="305.3" font-size="3.7" font-weight="bold">Media Server</text><text x="768.5" y="305.3" font-size="3.7" font-weight="bold">Backup Media Server</text><text x="781.5" y="221.5" font-size="3.6" font-weight="bold">Existing MegaPath</text><text x="781.5" y="225.8" font-size="3.6" font-weight="bold">Network Backbone</text><text x="781.5" y="230.1" font-size="3.6" font-weight="bold">(Primary IP</text><text x="781.5" y="234.4" font-size="3.6" font-weight="bold">Network)</text><text x="833.5" y="255.8" font-size="3.6" font-weight="bold">Internet</text><text x="833.5" y="260" font-size="3.6" font-weight="bold">(Alternate IP</text><text x="833.5" y="264.2" font-size="3.6" font-weight="bold">Network)</text><text x="833.5" y="355.5" font-size="3.5" font-weight="bold">Softphone</text><text x="833.5" y="359.7" font-size="3.5" font-weight="bold">(Remote)</text><text x="1004.6" y="236" font-size="3.7" font-weight="bold">Level3 Pop</text><text x="1004.6" y="242.7" font-size="3.3" font-weight="bold">DS3</text><text x="963.7" y="270.3" font-size="3.7" font-weight="bold">Firewall</text><text x="1004.6" y="269" font-size="3.7" font-weight="bold">Router</text><text x="741.7" y="372.9" font-size="3.5" font-weight="bold">T1 or DS3</text><text x="776.5" y="362.9" font-size="3.5" font-weight="bold">T1 or DS3</text><text x="799.95" y="384.4" font-size="3.5" font-weight="bold">Central</text><text x="799.95" y="388.6" font-size="3.5" font-weight="bold">Office 2</text><text x="799.95" y="409.3" font-size="3.5" font-weight="bold">Central</text><text x="799.95" y="413.5" font-size="3.5" font-weight="bold">Office 1</text><text x="911.25" y="331.4" font-size="3.5" font-weight="bold">Central</text><text x="911.25" y="335.6" font-size="3.5" font-weight="bold">Office 1</text><text x="1105.05" y="400.5" font-size="3.5" font-weight="bold">Central</text><text x="1105.05" y="404.7" font-size="3.5" font-weight="bold">Office 2</text><text x="873.6" y="406" font-size="3.6" font-weight="bold">Public Switched</text><text x="873.6" y="410.3" font-size="3.6" font-weight="bold">Telephone</text><text x="873.6" y="414.6" font-size="3.6" font-weight="bold">Network</text><text x="873.6" y="418.9" font-size="3.6" font-weight="bold">(Local and Toll)</text><text x="474.5" y="486.3" font-size="3.6" font-weight="bold">CTI</text><text x="474.5" y="490.6" font-size="3.6" font-weight="bold">Server</text><text x="507.3" y="486.3" font-size="3.6" font-weight="bold">Email</text><text x="507.3" y="490.6" font-size="3.6" font-weight="bold">Management</text><text x="540.7" y="486.3" font-size="3.6" font-weight="bold">Interactive</text><text x="540.7" y="490.6" font-size="3.6" font-weight="bold">Response</text><text x="575.3" y="486.3" font-size="3.6" font-weight="bold">ACDMS</text><text x="575.3" y="490.6" font-size="3.6" font-weight="bold">Server</text><text x="605.5" y="401.5" font-size="3.5" font-weight="bold">IP Phone</text><text x="642" y="401.5" font-size="3.5" font-weight="bold">IP Phone</text><text x="678.8" y="420" font-size="3.5" font-weight="bold">Softphone</text><text x="715.3" y="420" font-size="3.5" font-weight="bold">Softphone</text><text x="911.5" y="312.8" font-size="3.5" font-weight="bold">PRI</text><text x="911.5" y="317" font-size="3.5" font-weight="bold">Circuits</text><text x="942.2" y="362.5" font-size="3.5" font-weight="bold">IP Phone</text><text x="983.5" y="362.5" font-size="3.5" font-weight="bold">IP Phone</text><text x="1025.9" y="362.5" font-size="3.5" font-weight="bold">IP Phone</text><text x="1068" y="381" font-size="3.5" font-weight="bold">Softphone</text></g>
<text x="810.700" y="193" text-anchor="middle" font-family="Liberation Sans, sans-serif" font-size="7.600" fill="#3c3c3c" letter-spacing=".42" textLength="224.500">Network Diagram: Telecommunications Network Architecture</text>
</g></svg>
<div class="t c " style="left:-79px;top:54px;width:300px;font-size:6.3px;line-height:7px;transform:translate(0.80px,0.60px) rotate(0.04deg);color:#a8a8a8;-webkit-text-stroke:0">SCM</div>
<div class="t c " style="left:-79px;top:92px;width:300px;font-size:6.3px;line-height:7px;transform:translate(0.80px,0.60px) rotate(0.04deg);color:#a8a8a8;-webkit-text-stroke:0">LM</div>
<div class="t c " style="left:-79px;top:130px;width:300px;font-size:6.3px;line-height:7px;transform:translate(0.80px,0.60px) rotate(0.04deg);color:#a8a8a8;-webkit-text-stroke:0">LCE</div>
<div class="t c " style="left:-79px;top:168px;width:300px;font-size:6.3px;line-height:7px;transform:translate(0.80px,0.60px) rotate(0.04deg);color:#a8a8a8;-webkit-text-stroke:0">NVS</div>
<div class="t c " style="left:-79px;top:207px;width:300px;font-size:6.3px;line-height:7px;transform:translate(0.80px,0.10px) rotate(0.04deg);color:#a8a8a8;-webkit-text-stroke:0">SM</div>
<div class="t " style="left:125px;top:10px;font-size:7.5px;line-height:9px;transform:translate(0.00px,0.00px) rotate(0.04deg);letter-spacing:0px;color:#ececec">Dashboard</div>
<div class="t " style="left:238px;top:10px;font-size:7.5px;line-height:9px;transform:translate(0.80px,0.00px) rotate(0.04deg);letter-spacing:-0.13px;color:#ececec">SM Group</div>
<div class="t " style="left:351px;top:10px;font-size:7.5px;line-height:9px;transform:translate(0.30px,0.00px) rotate(0.04deg);letter-spacing:0.06px;color:#ececec">Template</div>
<div class="t " style="left:463px;top:10px;font-size:7.5px;line-height:9px;transform:translate(0.80px,0.00px) rotate(0.04deg);letter-spacing:0px;color:#ececec">Script Test</div>
<div class="t " style="left:572px;top:10px;font-size:7.5px;line-height:9px;transform:translate(0.80px,0.00px) rotate(0.04deg);letter-spacing:-0.2px;color:#ececec">Map</div>
<div class="t c " style="left:-16px;top:40px;width:300px;font-size:7.8px;line-height:9px;transform:translate(0.50px,0.50px) rotate(0.04deg) scaleX(0.879);color:#fff;font-weight:bold;-webkit-text-stroke:0.15px #fff">BACK TO LIST</div>
<div class="t " style="left:375px;top:40px;font-size:7.5px;line-height:9px;transform:translate(0.00px,0.20px) rotate(0.04deg);">Name</div>
<div class="t " style="left:508px;top:40px;font-size:7.5px;line-height:9px;transform:translate(0.80px,0.20px) rotate(0.04deg);">Description</div>
<div class="t c " style="left:524px;top:40px;width:300px;font-size:7.8px;line-height:9px;transform:translate(0.60px,0.60px) rotate(0.04deg) scaleX(0.889);color:#fff;font-weight:bold;-webkit-text-stroke:0.15px #fff">UPDATE</div>
<div class="t " style="left:852px;top:40px;font-size:7.5px;line-height:9px;transform:translate(0.50px,0.60px) rotate(0.04deg);">image</div>
<div class="t " style="left:883px;top:39px;font-size:8.7px;line-height:10px;transform:translate(0.00px,0.50px) rotate(0.04deg);color:#eee;-webkit-text-stroke:0.1px #eee">Change image</div>
<div class="t c " style="left:940px;top:41px;width:300px;font-size:7.8px;line-height:9px;transform:translate(0.45px,0.30px) rotate(0.04deg) scaleX(0.872);color:#fff;font-weight:bold;-webkit-text-stroke:0.15px #fff">UPLOAD NEW</div>
<div class="t b" style="left:254px;top:81px;font-size:7.5px;line-height:9px;transform:translate(0.30px,0.80px) rotate(0.04deg);letter-spacing:-0.3px">Add checks</div>
<div class="t " style="left:112px;top:104px;font-size:7.5px;line-height:9px;transform:translate(0.00px,0.70px) rotate(0.04deg);">Hostname</div>
<div class="t " style="left:257px;top:104px;font-size:7.5px;line-height:9px;transform:translate(0.00px,0.70px) rotate(0.04deg);">IP address</div>
<div class="t c " style="left:264px;top:105px;width:300px;font-size:7.8px;line-height:9px;transform:translate(0.15px,0.10px) rotate(0.04deg) scaleX(0.88);color:#fff;font-weight:bold;-webkit-text-stroke:0.15px #fff">SEARCH</div>
<div class="t " style="left:112px;top:123px;font-size:7.5px;line-height:9px;transform:translate(0.00px,0.60px) rotate(0.04deg);">Check</div>
<div class="t " style="left:112px;top:134px;font-size:7.5px;line-height:9px;transform:translate(0.00px,0.50px) rotate(0.04deg);">name</div>
<div class="t " style="left:260px;top:129px;font-size:7.5px;line-height:9px;transform:translate(0.00px,0.40px) rotate(0.04deg);">Only used</div>
<div class="t c " style="left:267px;top:129px;width:300px;font-size:7.8px;line-height:9px;transform:translate(0.00px,0.60px) rotate(0.04deg) scaleX(0.842);color:#fff;font-weight:bold;-webkit-text-stroke:0.15px #fff">RESET</div>
<div class="t " style="left:237px;top:154px;font-size:7.5px;line-height:9px;transform:translate(0.50px,0.60px) rotate(0.04deg);letter-spacing:-0.018px">Drag and drop the check icon on the image to add the check</div>
<div class="t b" style="left:114px;top:169px;font-size:7.5px;line-height:9px;transform:translate(0.00px,0.80px) rotate(0.04deg);letter-spacing:-0.16px">Hostname</div>
<div class="t b" style="left:194px;top:169px;font-size:7.5px;line-height:9px;transform:translate(0.50px,0.80px) rotate(0.04deg);letter-spacing:-0.22px">Check name</div>
<div class="t b" style="left:275px;top:169px;font-size:7.5px;line-height:9px;transform:translate(0.50px,0.80px) rotate(0.04deg);letter-spacing:-0.2px">IP address</div>
<div class="t " style="left:194px;top:187px;font-size:7.5px;line-height:9px;transform:translate(0.50px,0.70px) rotate(0.04deg);color:#dedede;-webkit-text-stroke:0.18px #dedede">Test RAM Crit</div>
<div class="t " style="left:277px;top:187px;font-size:10.4px;line-height:11px;transform:translate(0.70px,0.20px) rotate(0.04deg) scaleX(0.9);color:#c6c6c6;-webkit-text-stroke:0">10.*.*.*</div>
<div class="t " style="left:194px;top:207px;font-size:7.5px;line-height:9px;transform:translate(0.50px,0.70px) rotate(0.04deg);color:#dedede;-webkit-text-stroke:0.18px #dedede">Ping report</div>
<div class="t " style="left:278px;top:206px;font-size:10.4px;line-height:11px;transform:translate(0.00px,0.50px) rotate(0.04deg) scaleX(0.9);color:#c6c6c6;-webkit-text-stroke:0">10.*.*.*</div>
<div class="t " style="left:194px;top:223px;font-size:7.5px;line-height:9px;transform:translate(0.50px,0.70px) rotate(0.04deg);color:#dedede;-webkit-text-stroke:0.18px #dedede">Test RAM Crit</div>
<div class="t " style="left:277px;top:223px;font-size:10.4px;line-height:11px;transform:translate(0.50px,0.20px) rotate(0.04deg) scaleX(0.9);color:#c6c6c6;-webkit-text-stroke:0">10.*.*.*</div>
<div class="t " style="left:194px;top:239px;font-size:7.5px;line-height:9px;transform:translate(0.50px,0.70px) rotate(0.04deg);color:#dedede;-webkit-text-stroke:0.18px #dedede">Ping report</div>
<div class="t " style="left:277px;top:239px;font-size:10.4px;line-height:11px;transform:translate(0.50px,0.20px) rotate(0.04deg) scaleX(0.9);color:#c6c6c6;-webkit-text-stroke:0">10.*.*.*</div>
<div class="t " style="left:194px;top:259px;font-size:7.5px;line-height:9px;transform:translate(0.50px,0.70px) rotate(0.04deg);color:#dedede;-webkit-text-stroke:0.18px #dedede">CPU report</div>
<div class="t " style="left:278px;top:259px;font-size:10.4px;line-height:11px;transform:translate(0.50px,0.00px) rotate(0.04deg) scaleX(0.9);color:#c6c6c6;-webkit-text-stroke:0">10.*.*.*</div>
<div class="t " style="left:194px;top:283px;font-size:7.5px;line-height:9px;transform:translate(0.50px,0.70px) rotate(0.04deg);color:#dedede;-webkit-text-stroke:0.18px #dedede">Check IMAP</div>
<div class="t " style="left:277px;top:280px;font-size:10.4px;line-height:11px;transform:translate(0.50px,0.90px) rotate(0.04deg) scaleX(0.9);color:#c6c6c6;-webkit-text-stroke:0">192.*.*.*</div>
<div class="t " style="left:194px;top:307px;font-size:7.5px;line-height:9px;transform:translate(0.50px,0.70px) rotate(0.04deg);color:#dedede;-webkit-text-stroke:0.18px #dedede">Prova FTP</div>
<div class="t " style="left:276px;top:306px;font-size:10.4px;line-height:11px;transform:translate(0.00px,0.00px) rotate(0.04deg) scaleX(0.9);color:#c6c6c6;-webkit-text-stroke:0">10.*.*.*</div>
<div class="t " style="left:194px;top:331px;font-size:7.5px;line-height:9px;transform:translate(0.50px,0.70px) rotate(0.04deg);color:#dedede;-webkit-text-stroke:0.18px #dedede">Check Nexus I/O</div>
<div class="t " style="left:276px;top:330px;font-size:10.4px;line-height:11px;transform:translate(0.50px,0.00px) rotate(0.04deg) scaleX(0.9);color:#c6c6c6;-webkit-text-stroke:0">10.*.*.*</div>
<div class="t " style="left:194px;top:355px;font-size:7.5px;line-height:9px;transform:translate(0.50px,0.45px) rotate(0.04deg);color:#dedede;-webkit-text-stroke:0.18px #dedede">Check bandwidth mai</div>
<div class="t " style="left:279px;top:352px;font-size:10.4px;line-height:11px;transform:translate(0.00px,0.85px) rotate(0.04deg) scaleX(0.9);color:#c6c6c6;-webkit-text-stroke:0">192.*.*.*</div>
<div class="t " style="left:194px;top:375px;font-size:7.5px;line-height:9px;transform:translate(0.50px,0.20px) rotate(0.04deg);color:#dedede;-webkit-text-stroke:0.18px #dedede">IMAP Report</div>
<div class="t " style="left:277px;top:373px;font-size:10.4px;line-height:11px;transform:translate(0.50px,0.50px) rotate(0.04deg) scaleX(0.9);color:#c6c6c6;-webkit-text-stroke:0">192.*.*.*</div>
<div class="t " style="left:194px;top:395px;font-size:7.5px;line-height:9px;transform:translate(0.50px,0.20px) rotate(0.04deg);color:#dedede;-webkit-text-stroke:0.18px #dedede">Test FTP</div>
<div class="t " style="left:280px;top:392px;font-size:10.4px;line-height:11px;transform:translate(0.50px,0.50px) rotate(0.04deg) scaleX(0.9);color:#c6c6c6;-webkit-text-stroke:0">192.*.*.*</div>
<div class="t " style="left:194px;top:415px;font-size:7.5px;line-height:9px;transform:translate(0.50px,0.20px) rotate(0.04deg);color:#dedede;-webkit-text-stroke:0.18px #dedede">Check SMTP</div>
<div class="t " style="left:280px;top:413px;font-size:10.4px;line-height:11px;transform:translate(0.00px,0.20px) rotate(0.04deg) scaleX(0.9);color:#c6c6c6;-webkit-text-stroke:0">192.*.*.*</div>
<div class="t " style="left:194px;top:431px;font-size:7.5px;line-height:9px;transform:translate(0.50px,0.20px) rotate(0.04deg);color:#dedede;-webkit-text-stroke:0.18px #dedede">Checl Ping</div>
<div class="t " style="left:280px;top:431px;font-size:10.4px;line-height:11px;transform:translate(0.50px,0.10px) rotate(0.04deg) scaleX(0.9);color:#c6c6c6;-webkit-text-stroke:0">10.*.*.*</div>
<div class="t " style="left:194px;top:451px;font-size:7.5px;line-height:9px;transform:translate(0.50px,0.20px) rotate(0.04deg);color:#dedede;-webkit-text-stroke:0.18px #dedede">Check NTP</div>
<div class="t " style="left:281px;top:449px;font-size:10.4px;line-height:11px;transform:translate(0.50px,0.40px) rotate(0.04deg) scaleX(0.9);color:#c6c6c6;-webkit-text-stroke:0">192.*.*.*</div>
<div class="t " style="left:194px;top:475px;font-size:7.5px;line-height:9px;transform:translate(0.50px,0.20px) rotate(0.04deg);color:#dedede;-webkit-text-stroke:0.18px #dedede">Check FW bandwidth</div>
<div class="t " style="left:283px;top:474px;font-size:10.4px;line-height:11px;transform:translate(0.00px,0.05px) rotate(0.04deg) scaleX(0.9);color:#c6c6c6;-webkit-text-stroke:0">10.*.*.*</div>
<div class="t " style="left:194px;top:495px;font-size:7.5px;line-height:9px;transform:translate(0.50px,0.20px) rotate(0.04deg);color:#dedede;-webkit-text-stroke:0.18px #dedede">Check Cert</div>
<div class="t " style="left:282px;top:493px;font-size:10.4px;line-height:11px;transform:translate(0.50px,0.80px) rotate(0.04deg) scaleX(0.9);color:#c6c6c6;-webkit-text-stroke:0">192.*.*.*</div>
<div class="t " style="left:194px;top:515px;font-size:7.5px;line-height:9px;transform:translate(0.50px,0.20px) rotate(0.04deg);color:#dedede;-webkit-text-stroke:0.18px #dedede">Check Bandwidth new</div>
<div class="t " style="left:283px;top:513px;font-size:10.4px;line-height:11px;transform:translate(0.50px,0.60px) rotate(0.04deg) scaleX(0.9);color:#c6c6c6;-webkit-text-stroke:0">10.*.*.*</div>
<div class="t " style="left:194px;top:535px;font-size:7.5px;line-height:9px;transform:translate(0.50px,0.20px) rotate(0.04deg);color:#dedede;-webkit-text-stroke:0.18px #dedede">Ping report</div>
<div class="t " style="left:283px;top:533px;font-size:10.4px;line-height:11px;transform:translate(0.00px,0.80px) rotate(0.04deg) scaleX(0.9);color:#c6c6c6;-webkit-text-stroke:0">10.*.*.*</div>
<div class="t " style="left:194px;top:555px;font-size:7.5px;line-height:9px;transform:translate(0.50px,0.20px) rotate(0.04deg);color:#dedede;-webkit-text-stroke:0.18px #dedede">Prova STEFANO</div>
<div class="t " style="left:283px;top:552px;font-size:10.4px;line-height:11px;transform:translate(0.50px,0.50px) rotate(0.04deg) scaleX(0.9);color:#c6c6c6;-webkit-text-stroke:0">10.*.*.*</div>
<div class="t " style="left:252px;top:574px;font-size:7.5px;line-height:9px;transform:translate(0.00px,0.70px) rotate(0.04deg);">Page 1 / 6 <b>&gt;</b></div>
<div class="t " style="left:466px;top:81px;font-size:7.5px;line-height:9px;transform:translate(0.00px,0.80px) rotate(0.04deg);letter-spacing:-0.02px">Align checks on the image</div>
<div class="t " style="left:1076px;top:81px;font-size:7.5px;line-height:9px;transform:translate(0.00px,0.80px) rotate(0.04deg);letter-spacing:-0.06px;text-decoration:underline">Show preview</div>
</div></body></html>
